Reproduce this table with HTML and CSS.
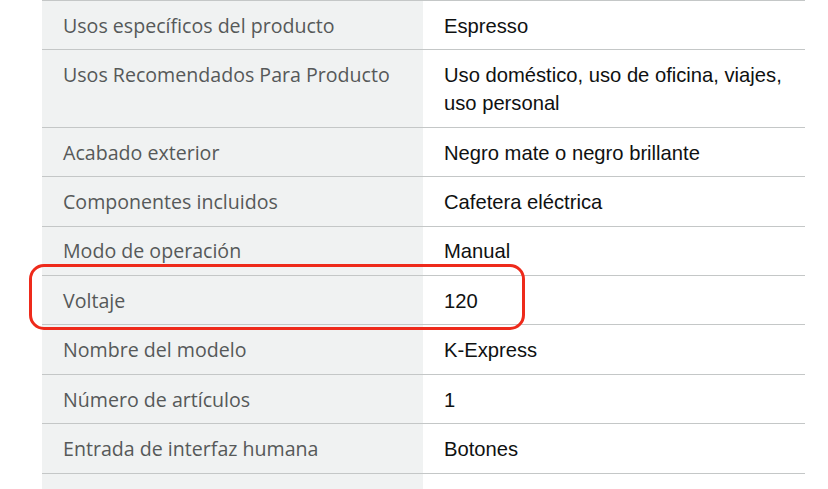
FILE: index.html
```html
<!DOCTYPE html>
<html lang="es">
<head>
<meta charset="utf-8">
<link rel="stylesheet" href="styles.css">
</head>
<body>
<div class="page">
  <table class="specs">
    <tr><th>Usos específicos del producto</th><td>Espresso</td></tr>
    <tr><th>Usos Recomendados Para Producto</th><td>Uso doméstico, uso de oficina, viajes, uso personal</td></tr>
    <tr><th>Acabado exterior</th><td>Negro mate o negro brillante</td></tr>
    <tr><th>Componentes incluidos</th><td>Cafetera eléctrica</td></tr>
    <tr><th>Modo de operación</th><td>Manual</td></tr>
    <tr class="hl"><th>Voltaje</th><td>120</td></tr>
    <tr><th>Nombre del modelo</th><td>K-Express</td></tr>
    <tr><th>Número de artículos</th><td>1</td></tr>
    <tr><th>Entrada de interfaz humana</th><td>Botones</td></tr>
    <tr class="last"><th></th><td></td></tr>
  </table>
  <div class="highlight"></div>
</div>
</body>
</html>
```
FILE: styles.css
```css
html, body {
  margin: 0;
  padding: 0;
  background: #ffffff;
}
.page {
  position: relative;
  width: 828px;
  height: 489px;
  overflow: hidden;
  padding-left: 42px;
  box-sizing: border-box;
}
.specs {
  border-collapse: collapse;
  width: 763px;
  table-layout: fixed;
  border-top: 1px solid #c4c7c7;
}
.specs th, .specs td {
  border-bottom: 1px solid #c4c7c7;
  padding: 10.9px 21px 9.5px 21px;
  line-height: 28px;
  vertical-align: top;
  text-align: left;
}
.specs th {
  width: 339px;
  background: #f0f2f2;
  color: #565959;
  font-family: "Open Sans", "Noto Sans", sans-serif;
  font-size: 19.6px;
  font-weight: 400;
}
.specs td {
  color: #0f1111;
  font-family: "Liberation Sans", Arial, sans-serif;
  font-size: 20.2px;
  padding-right: 18px;
}
.specs tr.last th, .specs tr.last td {
  border-bottom: none;
  height: 28px;
}
.highlight {
  position: absolute;
  left: 29px;
  top: 264px;
  width: 490px;
  height: 60px;
  border: 3px solid #ee2a1b;
  border-radius: 15px;
}
```
